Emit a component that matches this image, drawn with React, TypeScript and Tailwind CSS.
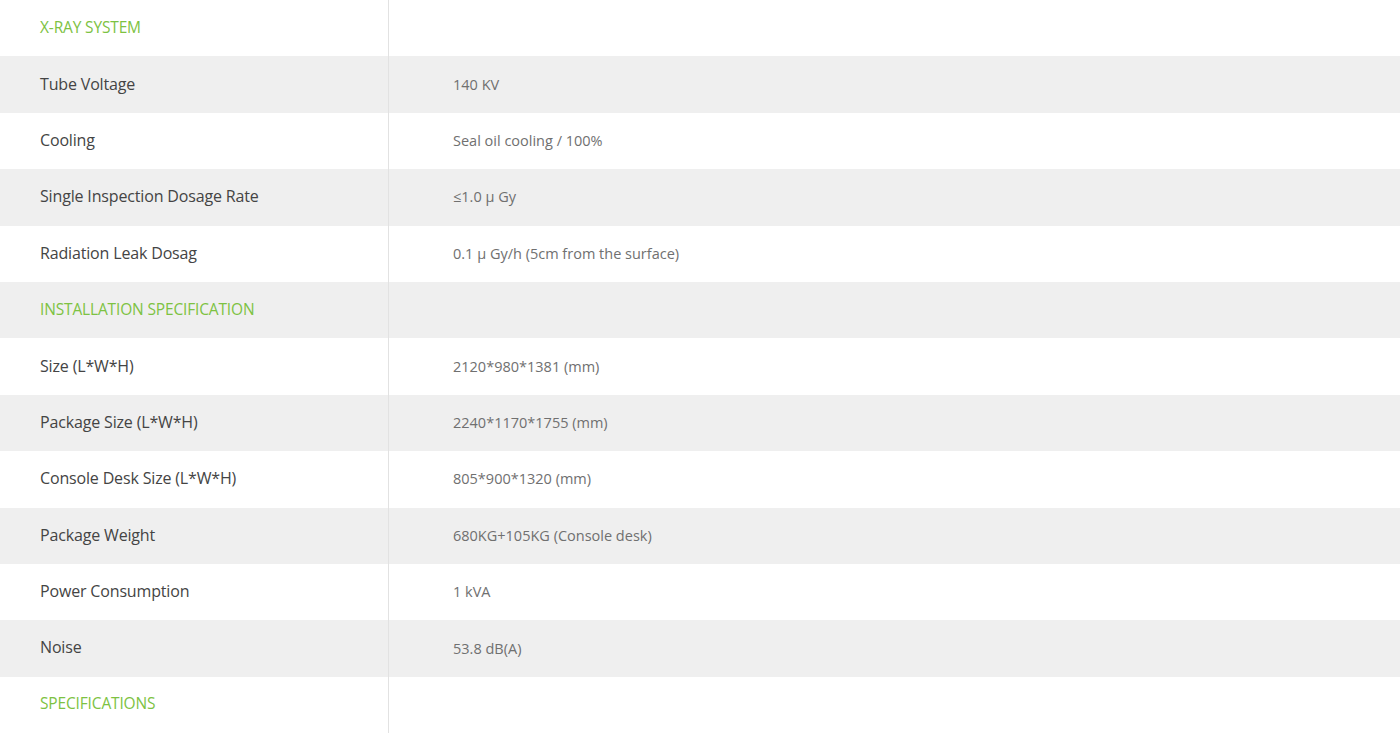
const rows: { label: string; value?: string; heading?: boolean }[] = [
  { label: "X-RAY SYSTEM", heading: true },
  { label: "Tube Voltage", value: "140 KV" },
  { label: "Cooling", value: "Seal oil cooling / 100%" },
  { label: "Single Inspection Dosage Rate", value: "≤1.0 μ Gy" },
  { label: "Radiation Leak Dosag", value: "0.1 μ Gy/h (5cm from the surface)" },
  { label: "INSTALLATION SPECIFICATION", heading: true },
  { label: "Size (L*W*H)", value: "2120*980*1381 (mm)" },
  { label: "Package Size (L*W*H)", value: "2240*1170*1755 (mm)" },
  { label: "Console Desk Size (L*W*H)", value: "805*900*1320 (mm)" },
  { label: "Package Weight", value: "680KG+105KG (Console desk)" },
  { label: "Power Consumption", value: "1 kVA" },
  { label: "Noise", value: "53.8 dB(A)" },
  { label: "SPECIFICATIONS", heading: true },
];

export default function App() {
  return (
    <div className="w-[1400px] h-[737px] bg-white overflow-hidden font-['Open_Sans',sans-serif]">
      {rows.map((row, i) => (
        <div
          key={i}
          className={`flex h-[56.4px] ${i % 2 === 1 ? "bg-[#efefef]" : "bg-white"}`}
        >
          <div className="w-[389px] shrink-0 border-r border-[#e2e2e2] flex items-center pl-10">
            {row.heading ? (
              <span className="text-[15.5px] tracking-[-0.01em] text-[#7dc242] -mt-[2px]">{row.label}</span>
            ) : (
              <span className="text-[16px] tracking-[-0.01em] text-[#444444] -mt-[2px]">{row.label}</span>
            )}
          </div>
          <div className="flex-1 flex items-center pl-16">
            <span className="text-[14.5px] text-[#707070]">{row.value}</span>
          </div>
        </div>
      ))}
    </div>
  );
}
